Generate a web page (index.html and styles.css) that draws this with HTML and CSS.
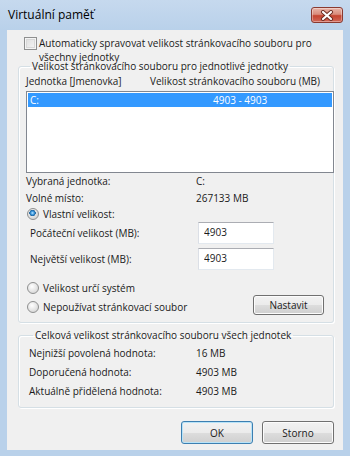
FILE: index.html
```html
<!DOCTYPE html>
<html lang="cs">
<head>
  <meta charset="UTF-8" />
  <title>Virtuální paměť</title>
  <link rel="stylesheet" href="styles.css">
</head>
<body>
  <div class="window">
    <!-- Title bar -->
    <div class="titlebar">
      <span class="title">Virtuální paměť</span>
      <button class="close-btn" aria-label="Zavřít">
        <svg width="14" height="11" viewBox="0 0 14 11">
          <path d="M3 2 L11 9 M11 2 L3 9" stroke="#6b2a20" stroke-width="4" stroke-linecap="round"/>
          <path d="M3 2 L11 9 M11 2 L3 9" stroke="#ffffff" stroke-width="2.2" stroke-linecap="round"/>
        </svg>
      </button>
    </div>

    <!-- Dialog body -->
    <div class="client">
      <label class="auto-row">
        <span class="checkbox"></span>
        <span class="auto-text">Automaticky spravovat velikost stránkovacího souboru pro<br>všechny jednotky</span>
      </label>

      <fieldset class="group group-drives">
        <legend>Velikost stránkovacího souboru pro jednotlivé jednotky</legend>
        <div class="list-head">
          <span class="col-drive">Jednotka [Jmenovka]</span>
          <span>Velikost stránkovacího souboru (MB)</span>
        </div>
        <div class="listbox">
          <div class="list-row selected">
            <span class="col-drive-val">C:</span>
            <span>4903 - 4903</span>
          </div>
        </div>

        <div class="info-row">
          <span class="info-label">Vybraná jednotka:</span>
          <span>C:</span>
        </div>
        <div class="info-row">
          <span class="info-label">Volné místo:</span>
          <span>267133 MB</span>
        </div>

        <label class="radio-row">
          <span class="radio checked"></span>
          <span>Vlastní velikost:</span>
        </label>
        <div class="field-row">
          <span class="field-label">Počáteční velikost (MB):</span>
          <input class="textbox" type="text" value="4903">
        </div>
        <div class="field-row second">
          <span class="field-label">Největší velikost (MB):</span>
          <input class="textbox" type="text" value="4903">
        </div>

        <label class="radio-row system">
          <span class="radio"></span>
          <span>Velikost určí systém</span>
        </label>
        <div class="none-row">
          <label class="radio-row none">
            <span class="radio"></span>
            <span>Nepoužívat stránkovací soubor</span>
          </label>
          <button class="btn btn-set">Nastavit</button>
        </div>
      </fieldset>

      <fieldset class="group group-total">
        <legend>Celková velikost stránkovacího souboru všech jednotek</legend>
        <div class="total-row">
          <span class="total-label">Nejnižší povolená hodnota:</span>
          <span>16 MB</span>
        </div>
        <div class="total-row">
          <span class="total-label">Doporučená hodnota:</span>
          <span>4903 MB</span>
        </div>
        <div class="total-row">
          <span class="total-label">Aktuálně přidělená hodnota:</span>
          <span>4903 MB</span>
        </div>
      </fieldset>

      <div class="dialog-buttons">
        <button class="btn btn-default">OK</button>
        <button class="btn">Storno</button>
      </div>
    </div>
  </div>
</body>
</html>
```

FILE: styles.css
```css
* {
  margin: 0;
  padding: 0;
  box-sizing: border-box;
}

body {
  background-color: #b9d1ea;
  font-family: 'Open Sans', 'DejaVu Sans', sans-serif;
  font-size: 10px;
  color: #1a1a1a;
}

.window {
  width: 350px;
  height: 456px;
  background-color: #b9d1ea;
  padding: 0 7px;
}

/* Title bar */
.titlebar {
  height: 30px;
  display: flex;
  align-items: flex-start;
  justify-content: space-between;
  margin: 0 -7px;
  padding: 0 7px 0 8px;
  background: linear-gradient(#c6d9ee, #b9d1ea);
}

.title {
  font-size: 12px;
  line-height: 14px;
  margin-top: 8px;
  color: #000;
}

.close-btn {
  width: 32px;
  height: 16px;
  margin-top: 7px;
  border: 1px solid #8a3a30;
  border-radius: 3px;
  background: linear-gradient(#e9b4a8 0%, #d98c7c 45%, #c5442f 55%, #d0685a 100%);
  box-shadow: inset 0 0 0 1px rgba(255, 255, 255, 0.35);
  display: flex;
  align-items: center;
  justify-content: center;
}

/* Client area */
.client {
  height: 420px;
  background-color: #f0f0f0;
  padding-top: 6px;
}

.auto-row {
  display: flex;
  align-items: flex-start;
  padding-left: 17px;
  line-height: 14px;
}

.checkbox {
  width: 13px;
  height: 13px;
  margin-top: 1px;
  margin-right: 2px;
  border: 1px solid #8e8f8f;
  background: linear-gradient(135deg, #dcdcdc, #f6f6f6);
  box-shadow: inset 0 0 0 1px #f4f4f4, inset 0 0 0 2px #d8d8d8;
  flex-shrink: 0;
}

/* Group boxes */
.group {
  margin-left: 11px;
  width: 316px;
  border: 1px solid #d5dfe5;
  border-radius: 3px;
  box-shadow: 1px 1px 0 #fff, inset 1px 1px 0 #fff;
}

.group legend {
  margin-left: 4px;
  padding: 0 2px;
  line-height: 12px;
}

.group-drives {
  margin-top: -4px;
  padding: 0 0 7px 7px;
}

.list-head {
  display: flex;
  line-height: 14px;
  margin-top: 2px;
}

.col-drive {
  width: 124px;
}

.listbox {
  height: 82px;
  margin: 3px -1px 0 0;
  border: 1px solid #828790;
  background-color: #fff;
  padding: 1px;
}

.list-row {
  display: flex;
  height: 14px;
  line-height: 14px;
  padding-left: 2px;
}

.list-row.selected {
  background-color: #3399ff;
  color: #fff;
}

.col-drive-val {
  width: 183px;
}

.info-row {
  display: flex;
  line-height: 17px;
}

.info-row:first-of-type {
  margin-top: 2px;
}

.info-label {
  width: 170px;
}

.radio-row {
  display: flex;
  align-items: center;
  line-height: 14px;
  padding-left: 1px;
}

.radio {
  width: 12px;
  height: 12px;
  margin-right: 4px;
  border-radius: 50%;
  border: 1px solid #8e8f8f;
  background: radial-gradient(circle at 40% 35%, #ffffff, #dcdcdc 70%);
  flex-shrink: 0;
}

.radio.checked {
  background:
    radial-gradient(circle at 45% 40%, #bfe8ff 0, #3f9be0 1.6px, #1a5f99 3px, transparent 3.4px),
    radial-gradient(circle at 40% 35%, #ffffff, #d6d6d6 70%);
}

.field-row {
  display: flex;
  align-items: center;
  margin-top: 1px;
  padding-left: 4px;
}

.field-row.second {
  margin-top: 4px;
}

.field-label {
  width: 168px;
}

.textbox {
  width: 76px;
  height: 22px;
  border: 1px solid #e3e9ef;
  border-top-color: #abadb3;
  border-left-color: #dbdfe6;
  background-color: #fff;
  padding: 0 0 3px 5px;
  font: inherit;
  color: inherit;
  outline: none;
}

.radio-row.system {
  margin-top: 11px;
}

.none-row {
  display: flex;
  align-items: flex-start;
}

.radio-row.none {
  margin-top: 5px;
}

/* Buttons */
.btn {
  width: 72px;
  height: 23px;
  border: 1px solid #707070;
  border-radius: 3px;
  background: linear-gradient(#f2f2f2 0%, #ebebeb 50%, #dddddd 51%, #cfcfcf 100%);
  box-shadow: inset 0 0 0 1px #fcfcfc;
  font: inherit;
  color: #1a1a1a;
}

.btn-set {
  width: 71px;
  height: 20px;
  margin: 0 9px 0 auto;
}

.btn-default {
  border-color: #3c7fb1;
  box-shadow: inset 0 0 0 1px #b8e3f8;
}

.group-total {
  margin-top: 6px;
  padding: 0 0 6px 10px;
}

.total-row {
  display: flex;
  line-height: 19px;
}

.total-row:first-of-type {
  margin-top: 3px;
}

.total-label {
  width: 167px;
}

.dialog-buttons {
  display: flex;
  justify-content: flex-end;
  gap: 9px;
  margin-top: 13px;
  padding-right: 9px;
}
```
